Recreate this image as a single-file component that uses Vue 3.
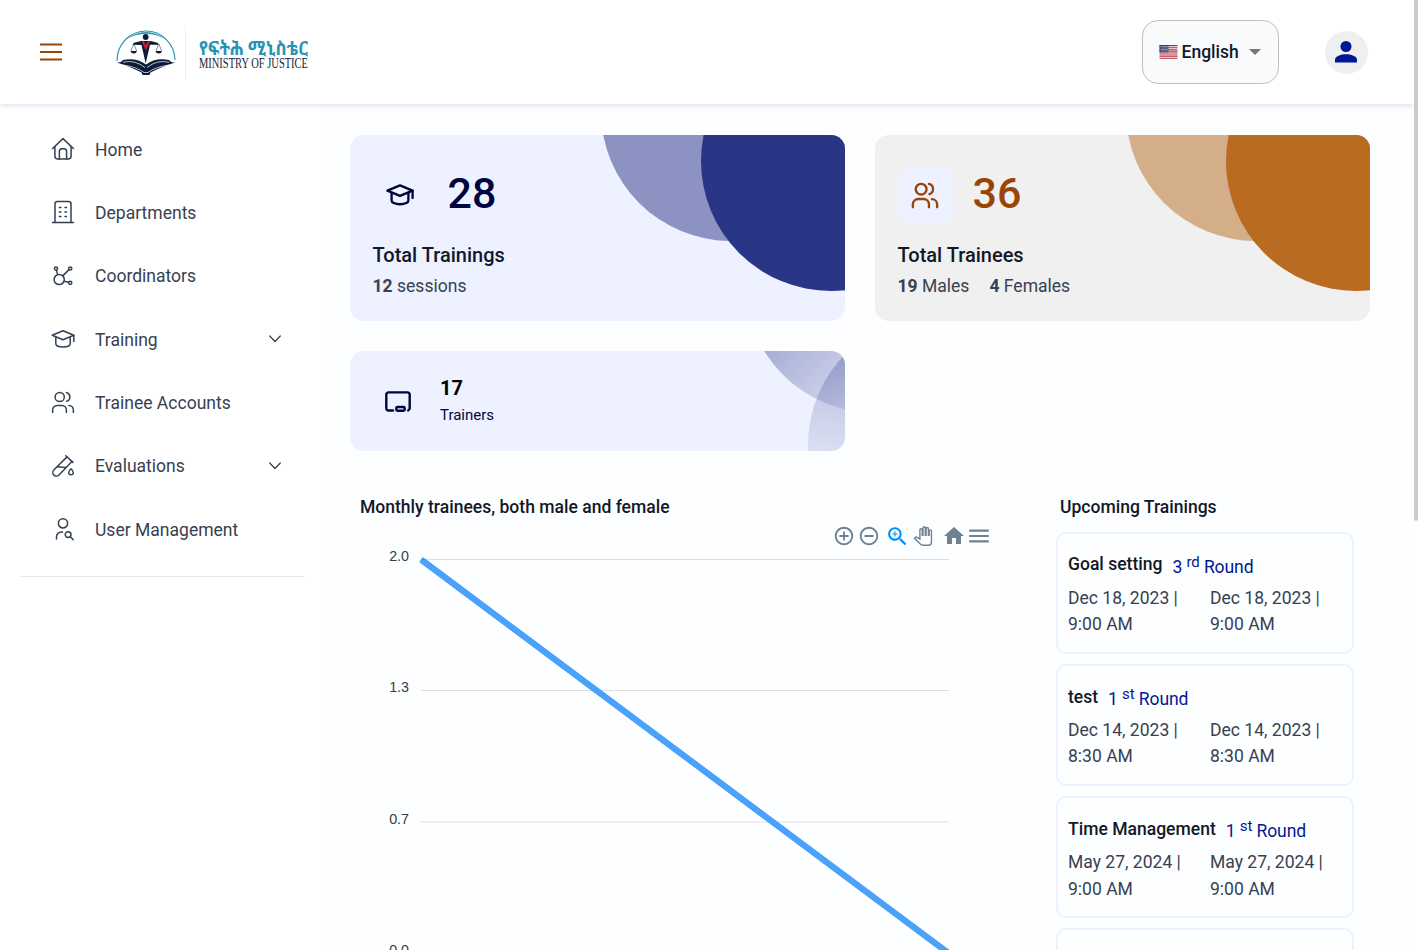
<script setup>
const nav = [
  { label: 'Home', icon: ['M1.6 11.500 12 1.600 22.4 11.500', 'M3.9 9.5V19a3 3 0 0 0 3 3h10.2a3 3 0 0 0 3-3V9.5', 'M8.4 22v-7.6a2.6 2.6 0 0 1 2.6-2.6h2a2.6 2.6 0 0 1 2.6 2.6V22'] },
  { label: 'Departments', icon: ['M1.5 22.500h21', 'M4 22.500V4a2.4 2.4 0 0 1 2.4-2.4h11.2A2.4 2.4 0 0 1 20 4v18.500', 'M8.400 7.5h1.500M14 7.5h1.500M8.400 12h1.500M14 12h1.500M8.400 16.4h1.500M14 16.4h1.500'] },
  { label: 'Coordinators', icon: ['M13.3 15.500a5.1 5.1 0 1 1-10.2 0a5.1 5.1 0 0 1 10.2 0', 'M6.6 4.500a1.6 1.6 0 1 1-3.2 0a1.6 1.6 0 0 1 3.2 0', 'M20.8 4.500a1.6 1.6 0 1 1-3.2 0a1.6 1.6 0 0 1 3.2 0', 'M20.8 18.800a1.6 1.6 0 1 1-3.2 0a1.6 1.6 0 0 1 3.2 0', 'M5.500 6.200l1 4.200M18 5.600l-6.200 6.300M13 17.200l4.600 1'] },
  { label: 'Training', expandable: true, icon: ['M1.2 8.300 12 3.800l10.800 4.500L12 12.800z', 'M4.800 10.500v6.200c0 1.600 2.600 3.200 7.200 3.200s7.200-1.600 7.200-3.200V10.500', 'M22.800 8.500v6'] },
  { label: 'Trainee Accounts', icon: ['M13.3 7a4.6 4.6 0 1 1-9.2 0a4.6 4.6 0 0 1 9.2 0', 'M1.6 22.500v-2.5a4.6 4.6 0 0 1 4.6-4.6h4.6a4.6 4.6 0 0 1 4.6 4.6V22.500', 'M15.4 2.500a4.6 4.6 0 0 1 .4 8.8', 'M18 15.500a4.6 4.6 0 0 1 4.4 4.5V22.500'] },
  { label: 'Evaluations', expandable: true, icon: ['M14.8 1.8l7.2 6.6', 'M16 2.9 2.8 16a3.6 3.6 0 0 0 5.2 5L20.9 7.4', 'M6.2 12.8l8.6.8', 'M20 14.8c1.4 1.300 2.300 2.400 2.300 3.700a2.300 2.300 0 0 1-4.600 0c0-1.300.9-2.400 2.300-3.700z'] },
  { label: 'User Management', icon: ['M16.600 6.400a4.600 4.600 0 1 1-9.200 0a4.600 4.600 0 0 1 9.200 0', 'M5.500 21.900v-2a5 5 0 0 1 5-5h1', 'M20 17.600a2.900 2.900 0 1 1-5.800 0a2.900 2.900 0 0 1 5.800 0', 'M19.300 19.800l3 2.900'] },
]
const gridLines = [
  { y: 28.5, label: '2.0' },
  { y: 159.5, label: '1.3' },
  { y: 291, label: '0.7' },
  { y: 422.5, label: '0.0' },
]
const upcoming = [
  { name: 'Goal setting', n: 3, suffix: 'rd', day: 'Dec 18, 2023', time: '9:00 AM' },
  { name: 'test', n: 1, suffix: 'st', day: 'Dec 14, 2023', time: '8:30 AM' },
  { name: 'Time Management', n: 1, suffix: 'st', day: 'May 27, 2024', time: '9:00 AM' },
  { name: '', n: '', suffix: '', day: '', time: '' },
]
</script>

<template>
  <div class="app">
    <header class="topbar">
      <svg class="burger" width="22" height="18" viewBox="0 0 22 18"><path d="M0 1.500h22M0 9h22M0 16.500h22" stroke="#9a4508" stroke-width="2" /></svg>
      <svg class="logo" width="204" height="64" viewBox="0 0 204 64">
        <path d="M7 41a29 29.500 0 0 1 58-1" fill="none" stroke="#2a93ad" stroke-width="1.100" />
        <path d="M15 20Q36 4 57 20Q36 7.500 15 20z" fill="#2a93ad" />
        <g fill="#0c1c38">
          <circle cx="35.700" cy="17" r="2.900" />
          <path d="M31 21h9.500l7 1.700 1.500 2-9 .1-4.300 18.700L31.500 25l-9-.3 1.500-2z" />
          <path d="M20.500 31h6.500q-.6 2.500-3.200 2.500T20.500 31zM45.500 31h6.500q-.6 2.500-3.200 2.500T45.500 31z" />
          <path d="M7 42.500q4 .5 6-2.500 13-3 23 4.500 10-7.500 23-4.500 2 3 6 2.500-14 4.500-24.500 10l-1 2.500h-7l-1-2.500Q21 47 7 42.500z" />
        </g>
        <path d="M13 42.200Q25 39.500 35 47.500M59 42.200Q47 39.500 37 47.500M13 45q14 2 21 7.500h4q7-5.500 21-7.500" fill="none" stroke="#fff" stroke-width=".7" />
        <path d="M23.700 24l-2.700 7M23.900 24l2.700 7M48.700 24l-2.700 7M48.900 24l2.700 7" stroke="#0c1c38" stroke-width=".5" />
        <path d="M32 21.200h2l1.900 4 2-4h2l-.6 2-3 6.500h-1l-2.800-6.500z" fill="#c8202e" />
        <path d="M75.500 6v54" stroke="#f0f0f3" />
        <text x="89" y="34.700" textLength="109" lengthAdjust="spacingAndGlyphs" class="logo-am">የፍትሕ ሚኒስቴር</text>
        <text x="89" y="47.500" textLength="109" lengthAdjust="spacingAndGlyphs" class="logo-en">MINISTRY OF JUSTICE</text>
      </svg>
      <div class="language">
        <svg width="19" height="14" viewBox="0 0 19 14">
          <rect width="19" height="14" rx="1" fill="#fff" />
          <path d="M.5.600h18M.5 2.700h18M.5 4.800h18M.5 6.900h18M.5 9h18M.5 11.100h18M.5 13.200h18" stroke="#b22a3c" stroke-width="1.150" />
          <rect x=".5" width="9" height="7.400" fill="#3f3c70" />
          <path d="M1.500 1.500h8M2.500 3h7M1.500 4.500h8M2.500 6h7" stroke="#dcdcec" stroke-width=".9" stroke-dasharray="1 1" />
        </svg>
        <span>English</span>
        <svg class="caret" width="12" height="6" viewBox="0 0 12 6"><path d="M0 0h12L6 6z" fill="#757575" /></svg>
      </div>
      <div class="avatar">
        <svg width="22" height="22" viewBox="0 0 22 22" fill="#001896"><circle cx="11" cy="5.500" r="5.500" /><path d="M0 21.500v-2.700c0-3.600 6-5.500 11-5.500s11 1.900 11 5.500v2.700z" /></svg>
      </div>
    </header>

    <div class="body">
      <aside class="sidebar">
        <nav>
          <a v-for="item in nav" :key="item.label" class="nav-item">
            <svg width="24" height="24" viewBox="0 0 24 24" class="line-icon"><path v-for="d in item.icon" :key="d" :d="d" /></svg>
            <span>{{ item.label }}</span>
            <svg v-if="item.expandable" class="chevron line-icon" width="12" height="8" viewBox="0 0 12 8"><path d="M.7 1 6 6.500 11.300 1" /></svg>
          </a>
        </nav>
      </aside>

      <main class="content">
        <section class="cards">
          <article class="card trainings">
            <i class="disc back" /><i class="disc front" />
            <div class="figure">
              <div class="badge"><svg width="28" height="28" viewBox="0 0 24 24" class="line-icon bold"><path v-for="d in nav[3].icon" :key="d" :d="d" /></svg></div>
              <strong>28</strong>
            </div>
            <h3>Total Trainings</h3>
            <p><b>12</b> sessions</p>
          </article>
          <article class="card trainees">
            <i class="disc back" /><i class="disc front" />
            <div class="figure">
              <div class="badge"><svg width="28" height="28" viewBox="0 0 24 24" class="line-icon bold"><path v-for="d in nav[4].icon" :key="d" :d="d" /></svg></div>
              <strong>36</strong>
            </div>
            <h3>Total Trainees</h3>
            <p><span><b>19</b> Males</span><span><b>4</b> Females</span></p>
          </article>
          <article class="card trainers">
            <i class="disc back" /><i class="disc front" />
            <svg width="26" height="22" viewBox="0 0 26 22" fill="none" stroke="#00063f" stroke-width="2.400" stroke-linecap="round" stroke-linejoin="round">
              <path d="M8 19.500H3.500A2.200 2.200 0 0 1 1.300 17.300V3.600a2.200 2.200 0 0 1 2.200-2.200h19a2.200 2.200 0 0 1 2.200 2.200v13.700a2.200 2.200 0 0 1-1.500 2.100" />
              <rect x="11.300" y="16" width="8.400" height="3.700" rx="1.200" />
            </svg>
            <div><strong>17</strong><span>Trainers</span></div>
          </article>
        </section>

        <section class="lower">
          <div class="chart">
            <h4>Monthly trainees, both male and female</h4>
            <div class="toolbar">
              <svg class="t-in" width="22" height="22" viewBox="0 0 24 24"><path d="M13 7h-2v4H7v2h4v4h2v-4h4v-2h-4V7zm-1-5C6.480 2 2 6.480 2 12s4.480 10 10 10 10-4.480 10-10S17.520 2 12 2zm0 18c-4.410 0-8-3.590-8-8s3.590-8 8-8 8 3.590 8 8-3.590 8-8 8z" /></svg>
              <svg class="t-out" width="22" height="22" viewBox="0 0 24 24"><path d="M7 11v2h10v-2H7zm5-9C6.480 2 2 6.480 2 12s4.480 10 10 10 10-4.480 10-10S17.520 2 12 2zm0 18c-4.410 0-8-3.590-8-8s3.590-8 8-8 8 3.590 8 8-3.590 8-8 8z" /></svg>
              <svg class="t-zoom" width="25" height="25" viewBox="0 0 24 24"><path d="M15.500 14h-.79l-.28-.27C15.410 12.590 16 11.110 16 9.500 16 5.910 13.090 3 9.500 3S3 5.910 3 9.500 5.910 16 9.500 16c1.610 0 3.090-.59 4.230-1.570l.27.28v.79l5 4.990L20.490 19l-4.990-5zm-6 0C7.010 14 5 11.990 5 9.500S7.010 5 9.500 5 14 7.010 14 9.500 11.990 14 9.500 14z" /><path d="M12 10h-2v2H9v-2H7V9h2V7h1v2h2v1z" /></svg>
              <svg class="t-pan" width="20" height="20" viewBox="-1 -1 26 26"><path d="M23 5.500V20c0 2.200-1.800 4-4 4h-7.300c-1.080 0-2.100-.43-2.850-1.190L1 14.830s1.260-1.230 1.300-1.250c.22-.19.490-.29.790-.29.220 0 .42.060.6.160.04.010 4.310 2.460 4.310 2.460V4c0-.83.67-1.500 1.500-1.500S11 3.170 11 4v7h1V1.500c0-.83.67-1.500 1.500-1.500S15 .67 15 1.500V11h1V2.500c0-.83.67-1.500 1.500-1.500s1.500.67 1.500 1.500V11h1V5.500c0-.83.67-1.500 1.500-1.500s1.500.67 1.500 1.500z" /></svg>
              <svg class="t-home" width="24" height="24" viewBox="0 0 24 24"><path d="M10 20v-6h4v6h5v-8h3L12 3 2 12h3v8z" /></svg>
              <svg class="t-menu" width="26" height="26" viewBox="0 0 24 24"><path d="M3 18h18v-2H3v2zm0-5h18v-2H3v2zm0-7v2h18V6H3z" /></svg>
            </div>
            <svg class="plot" width="650" height="440" viewBox="0 0 650 440">
              <clipPath id="plot-area"><rect x="66" y="26" width="538" height="414" /></clipPath>
              <path d="M71 28.500 599 422.500" stroke="#4ba2fb" stroke-width="6" clip-path="url(#plot-area)" />
              <g v-for="g in gridLines" :key="g.label">
                <line x1="71" x2="599" :y1="g.y" :y2="g.y" stroke="#000" stroke-opacity=".12" />
                <text x="59" :y="g.y + 1.500" text-anchor="end">{{ g.label }}</text>
              </g>
              <path d="M73 30 599 422.500" stroke="#4ba2fb" stroke-width="6" clip-path="url(#plot-area)" />
            </svg>
          </div>
          <div class="upcoming">
            <h4>Upcoming Trainings</h4>
            <article v-for="(t, i) in upcoming" :key="i" class="event">
              <template v-if="t.name">
                <div class="title"><b>{{ t.name }}</b><span>{{ t.n }} <sup>{{ t.suffix }}</sup> Round</span></div>
                <div class="dates">
                  <p>{{ t.day }} |<br>{{ t.time }}</p>
                  <p>{{ t.day }} |<br>{{ t.time }}</p>
                </div>
              </template>
            </article>
          </div>
        </section>
      </main>
    </div>
    <div class="scrollbar" />
  </div>
</template>

<style>
body { margin: 0; overflow: hidden; }
</style>

<style scoped>
* { box-sizing: border-box; }
h3, h4, p { margin: 0; }
svg { display: block; flex: none; overflow: visible; }
.app { position: relative; width: 1420px; height: 950px; overflow: hidden; background: #fff; font-family: Roboto, "Liberation Sans", sans-serif; font-size: 17.550px; color: #374151; }
.topbar { position: relative; z-index: 1; display: flex; align-items: center; height: 104px; width: 1414px; padding: 0 46px 0 40px; background: #fff; box-shadow: 0 2px 5px rgba(80, 80, 170, .16); }
.logo { margin: 0 auto 0 48px; }
.logo-am { font-family: "Noto Sans Ethiopic", "Abyssinica SIL", "Noto Sans", sans-serif; font-size: 19px; font-weight: 700; fill: #2a93b5; }
.logo-en { font-family: "Liberation Serif", serif; font-size: 14.500px; fill: #17233c; }
.language { display: flex; align-items: center; width: 137px; height: 64px; margin-right: 46px; padding-left: 16px; border: 1px solid #bfbfc1; border-radius: 16px; background: #f9fafc; color: #111827; font-weight: 500; }
.language span { margin: -1px 0 0 3.500px; }
.caret { margin-left: 10px; }
.avatar { display: grid; place-items: center; width: 43px; height: 43px; border-radius: 50%; background: #efefef; }
.avatar svg { margin-right: 1px; }
.body { display: flex; height: 846px; }
.sidebar { width: 323px; padding: 13.450px 18px 0 20px; }
.sidebar nav { height: 459.550px; border-bottom: 1px solid #e2e8f0; }
.nav-item { display: flex; align-items: center; height: 63.333px; padding: 0 24px 0 31px; line-height: 27px; }
.nav-item span { margin: 2px 0 0 20px; }
.chevron { margin-left: auto; }
.line-icon { fill: none; stroke: #334155; stroke-width: 1.500; stroke-linecap: round; stroke-linejoin: round; }
.line-icon.chevron { stroke-width: 1.250; }
.line-icon.bold { stroke: currentColor; stroke-width: 2; }
.content { width: 1091px; padding: 31px 44px 0 27px; background: #fdfeff; }
.cards { display: grid; grid-template-columns: 495px 495px; gap: 30px; }
.card { position: relative; overflow: hidden; height: 186px; padding: 33px 22.500px 0; border-radius: 14px; background: #eef1ff; color: #00063f; }
.trainees { background: #f0f0f0; color: #9a4508; }
.disc { position: absolute; width: 260px; height: 260px; border-radius: 50%; background: #293686; }
.trainees .disc { background: #b86b21; }
.disc.back { left: 251px; top: -154px; opacity: .5; }
.disc.front { left: 351px; top: -104px; }
.figure { display: flex; align-items: center; height: 55px; }
.badge { display: grid; place-items: center; width: 55px; height: 55px; border-radius: 10px; background: #eef1ff; }
.badge svg { margin: -1px 1px 0 0; }
.figure strong { margin: -6px 0 0 20px; font-size: 43px; font-weight: 500; line-height: 50px; }
.card h3 { margin-top: 18px; color: #111827; font-size: 20px; font-weight: 500; line-height: 28px; }
.card p { display: flex; gap: 20px; margin-top: 3px; color: #374151; line-height: 28px; }
.card.trainings p { gap: 4.400px; }
.card b { font-weight: 700; }
.card.trainers { display: flex; height: 100px; padding: 39.500px 35px 0; }
.trainers .disc.back { left: 395px; top: -198px; opacity: 1; background: linear-gradient(135deg, rgba(41, 54, 134, .46) 30%, rgba(41, 54, 134, .1) 72%); }
.trainers .disc.front { left: 458px; top: -36px; background: linear-gradient(190deg, rgba(41, 54, 134, .38) 10%, rgba(41, 54, 134, 0) 75%); }
.trainers div { display: flex; flex-direction: column; margin: -14.500px 0 0 29px; }
.trainers strong { color: #000; font-size: 20px; font-weight: 700; line-height: 25px; }
.trainers span { margin-top: 4px; font-size: 15px; line-height: 20px; }
.lower { display: flex; margin-top: 42px; }
h4 { color: #111827; font-size: 17.550px; font-weight: 500; line-height: 28px; padding-left: 10px; }
.chart { display: flex; flex-direction: column; width: 706px; }
.toolbar { display: flex; align-items: center; height: 30px; padding-left: 482.500px; }
.toolbar svg { fill: #6e8192; }
.toolbar .t-out { margin-left: 3px; }
.toolbar .t-zoom { margin-left: 5.500px; fill: #008ffb; }
.toolbar .t-pan { margin-left: 3px; fill: #fff; stroke: #6e8192; stroke-width: 1.800; }
.toolbar .t-home { margin-left: 8.500px; }
.toolbar .t-menu { margin-left: .1px; }
.plot { margin-top: -20px; }
.plot text { fill: #373d3f; font-family: "Liberation Sans", Arial, sans-serif; font-size: 14.300px; }
.upcoming { width: 298px; }
.upcoming h4 { padding-left: 4px; }
.event { height: 122px; margin-bottom: 10px; padding: 16px 10px 0; border: 2px solid #eef1ff; border-radius: 10px; }
.upcoming h4 + .event { margin-top: 11px; }
.title { display: flex; align-items: flex-start; height: 35px; line-height: 28px; }
.title b { color: #111827; font-weight: 500; }
.event:nth-of-type(n + 2) .title b { margin-top: 1px; }
.title span { margin: 3px 0 0 10px; color: #001896; letter-spacing: -.1px; }
.title sup { position: relative; top: -6px; font-size: 15px; line-height: 0; vertical-align: baseline; }
.dates { display: grid; grid-template-columns: 142px 1fr; line-height: 26.400px; }
.event:nth-of-type(3) .dates { line-height: 27px; }
.scrollbar { position: absolute; z-index: 2; top: 0; right: 2px; width: 4px; height: 521px; border-radius: 0 0 2px 2px; background: #cbcbcb; }
</style>
